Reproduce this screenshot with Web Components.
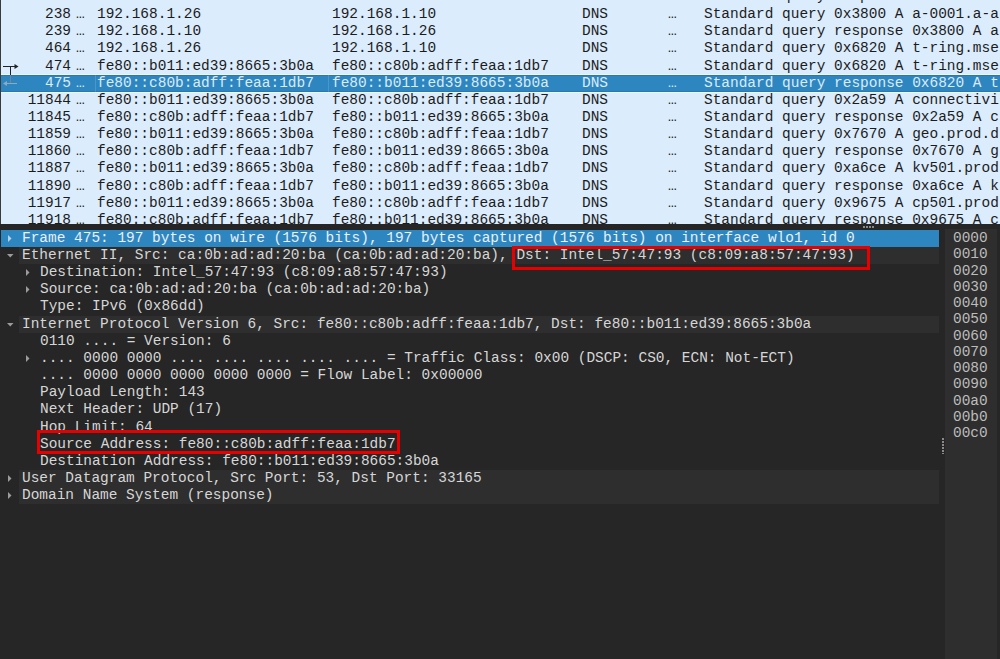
<!DOCTYPE html>
<html>
<head>
<meta charset="utf-8">
<style>
  html, body { margin: 0; padding: 0; height: 100%; background: #262626; overflow: hidden; }
</style>
</head>
<body>
<capture-window></capture-window>
<script>
const MONO = `"Liberation Mono", monospace`;

const PACKETS = [
  ['', '', '', '', 'Standard query response'],
  ['238', '192.168.1.26', '192.168.1.10', 'DNS', 'Standard query 0x3800 A a-0001.a-a'],
  ['239', '192.168.1.10', '192.168.1.26', 'DNS', 'Standard query response 0x3800 A a'],
  ['464', '192.168.1.26', '192.168.1.10', 'DNS', 'Standard query 0x6820 A t-ring.mse'],
  ['474', 'fe80::b011:ed39:8665:3b0a', 'fe80::c80b:adff:feaa:1db7', 'DNS', 'Standard query 0x6820 A t-ring.mse'],
  ['475', 'fe80::c80b:adff:feaa:1db7', 'fe80::b011:ed39:8665:3b0a', 'DNS', 'Standard query response 0x6820 A t'],
  ['11844', 'fe80::b011:ed39:8665:3b0a', 'fe80::c80b:adff:feaa:1db7', 'DNS', 'Standard query 0x2a59 A connectivi'],
  ['11845', 'fe80::c80b:adff:feaa:1db7', 'fe80::b011:ed39:8665:3b0a', 'DNS', 'Standard query response 0x2a59 A c'],
  ['11859', 'fe80::b011:ed39:8665:3b0a', 'fe80::c80b:adff:feaa:1db7', 'DNS', 'Standard query 0x7670 A geo.prod.d'],
  ['11860', 'fe80::c80b:adff:feaa:1db7', 'fe80::b011:ed39:8665:3b0a', 'DNS', 'Standard query response 0x7670 A g'],
  ['11887', 'fe80::b011:ed39:8665:3b0a', 'fe80::c80b:adff:feaa:1db7', 'DNS', 'Standard query 0xa6ce A kv501.prod'],
  ['11890', 'fe80::c80b:adff:feaa:1db7', 'fe80::b011:ed39:8665:3b0a', 'DNS', 'Standard query response 0xa6ce A k'],
  ['11917', 'fe80::b011:ed39:8665:3b0a', 'fe80::c80b:adff:feaa:1db7', 'DNS', 'Standard query 0x9675 A cp501.prod'],
  ['11918', 'fe80::c80b:adff:feaa:1db7', 'fe80::b011:ed39:8665:3b0a', 'DNS', 'Standard query response 0x9675 A c'],
];

const TREE = [
  { t: 'Frame 475: 197 bytes on wire (1576 bits), 197 bytes captured (1576 bits) on interface wlo1, id 0', lvl: 0, exp: 'closed', sel: 1 },
  { t: 'Ethernet II, Src: ca:0b:ad:ad:20:ba (ca:0b:ad:ad:20:ba), Dst: Intel_57:47:93 (c8:09:a8:57:47:93)', lvl: 0, exp: 'open', band: 1 },
  { t: 'Destination: Intel_57:47:93 (c8:09:a8:57:47:93)', lvl: 1, exp: 'closed' },
  { t: 'Source: ca:0b:ad:ad:20:ba (ca:0b:ad:ad:20:ba)', lvl: 1, exp: 'closed' },
  { t: 'Type: IPv6 (0x86dd)', lvl: 1 },
  { t: 'Internet Protocol Version 6, Src: fe80::c80b:adff:feaa:1db7, Dst: fe80::b011:ed39:8665:3b0a', lvl: 0, exp: 'open', band: 1 },
  { t: '0110 .... = Version: 6', lvl: 1 },
  { t: '.... 0000 0000 .... .... .... .... .... = Traffic Class: 0x00 (DSCP: CS0, ECN: Not-ECT)', lvl: 1, exp: 'closed' },
  { t: '.... 0000 0000 0000 0000 0000 = Flow Label: 0x00000', lvl: 1 },
  { t: 'Payload Length: 143', lvl: 1 },
  { t: 'Next Header: UDP (17)', lvl: 1 },
  { t: 'Hop Limit: 64', lvl: 1 },
  { t: 'Source Address: fe80::c80b:adff:feaa:1db7', lvl: 1 },
  { t: 'Destination Address: fe80::b011:ed39:8665:3b0a', lvl: 1 },
  { t: 'User Datagram Protocol, Src Port: 53, Dst Port: 33165', lvl: 0, exp: 'closed', band: 1 },
  { t: 'Domain Name System (response)', lvl: 0, exp: 'closed', band: 1 },
];

const OFFSETS = ['0000','0010','0020','0030','0040','0050','0060','0070','0080','0090','00a0','00b0','00c0'];

class PacketRow extends HTMLElement {
  connectedCallback() {
    const [no, src, dst, proto, info] = JSON.parse(this.getAttribute('data'));
    const mark = this.getAttribute('mark');
    // related-packet arrows in the first column
    const marks = {
      out: `<svg width="19" height="17" viewBox="0 0 19 17"><path d="M2 8.5H14" stroke="#222" fill="none"/><path d="M13.5 6l4 2.5-4 2.5z" fill="#222"/><path d="M9.5 8.5V17.2" stroke="#222" fill="none"/></svg>`,
      back: `<svg width="19" height="17" viewBox="0 0 19 17"><path d="M9.5 0V8.5" stroke="#6f8799" fill="none"/><path d="M5 8.5H16" stroke="#8fa9bd" fill="none"/><path d="M6 6l-4 2.5 4 2.5z" fill="#8fa9bd"/></svg>`,
    };
    this.attachShadow({ mode: 'open' });
    this.shadowRoot.innerHTML = `
      <style>
        :host {
          display: grid;
          grid-template-columns: 19px 51px 26px 235px 250px 87px 35px 1fr;
          height: 17.17px;
          line-height: 17.17px;
          white-space: nowrap;
          color: #1c1c1c;
        }
        :host([partial]) { margin-bottom: 1.4px; }
        :host([selected]) {
          background: #2e86c1;
          color: #dcebf6;
          box-shadow: 0 -1px 0 #eef6fd, 0 1px 0 #eef6fd, inset 0 1px 0 #2a78ad, inset 0 -1px 0 #2a78ad;
        }
        .mark { display: flex; }
        .no { text-align: right; }
        .cell { overflow: hidden; }
        .dots { padding-left: 5px; }
        .dots2 { margin-left: -1px; }
        .src { margin-left: -2px; padding-left: 2px; }
        .dst { margin-left: -4px; padding-left: 4px; }
        :host([selected]) .src, :host([selected]) .dst { box-shadow: inset 1px 0 0 rgba(255,255,255,.14); }
      </style>
      <span class="mark">${mark ? marks[mark] : ''}</span>
      <span class="cell no">${no}</span>
      <span class="cell dots">${no ? '…' : ''}</span>
      <span class="cell src">${src}</span>
      <span class="cell dst">${dst}</span>
      <span class="cell">${proto}</span>
      <span class="cell dots2">${no ? '…' : ''}</span>
      <span class="cell">${info}</span>
    `;
  }
}
customElements.define('packet-row', PacketRow);

class PacketList extends HTMLElement {
  connectedCallback() {
    this.attachShadow({ mode: 'open' });
    this.shadowRoot.innerHTML = `
      <style>
        :host {
          display: block;
          height: 224px;
          overflow: hidden;
          background: #dbecfc;
          font: 14.46px ${MONO};
          border-left: 1px solid #3a3a3a;
          box-sizing: border-box;
        }
        .inner { margin-top: -12.5px; }
      </style>
      <div class="inner"></div>
    `;
    const inner = this.shadowRoot.querySelector('.inner');
    PACKETS.forEach(p => {
      const r = document.createElement('packet-row');
      r.setAttribute('data', JSON.stringify(p));
      if (!p[0]) r.setAttribute('partial', '');
      if (p[0] === '474') r.setAttribute('mark', 'out');
      if (p[0] === '475') { r.setAttribute('mark', 'back'); r.setAttribute('selected', ''); }
      inner.appendChild(r);
    });
  }
}
customElements.define('packet-list', PacketList);

class TreeRow extends HTMLElement {
  connectedCallback() {
    const lvl = +this.getAttribute('lvl');
    const exp = this.getAttribute('exp');
    const tri = exp === 'open'
      ? `<svg width="9" height="9" viewBox="0 0 9 9"><path d="M1 3h6.5L4.25 6.5z"/></svg>`
      : exp === 'closed'
        ? `<svg width="9" height="9" viewBox="0 0 9 9"><path d="M2 1v7l3.5-3.5z"/></svg>`
        : '';
    this.attachShadow({ mode: 'open' });
    this.shadowRoot.innerHTML = `
      <style>
        :host {
          display: flex;
          height: 17.17px;
          line-height: 17.17px;
          white-space: nowrap;
          color: #d6d6d6;
          padding-left: ${lvl * 18 + 5}px;
        }
        :host([band]) .fill { background: #2e2e2e; }
        :host([sel]) { background: #2e86c1; color: #e8f1f8; }
        :host([sel]) path { fill: #b3d3ea; }
        path { fill: #9c9c9c; }
        .tri { width: 13px; flex: none; display: flex; align-items: center; }
        .fill { flex: 1; padding-left: 3px; }
      </style>
      <span class="tri">${tri}</span>
      <span class="fill"><slot></slot></span>
    `;
  }
}
customElements.define('tree-row', TreeRow);

class DetailTree extends HTMLElement {
  connectedCallback() {
    this.attachShadow({ mode: 'open' });
    this.shadowRoot.innerHTML = `
      <style>
        :host {
          display: block;
          flex: 1;
          position: relative;
          font: 14.46px ${MONO};
          padding: 0.8px 1px 0 1px;
        }
        .hl {
          position: absolute;
          border: 3px solid #e60000;
          box-sizing: border-box;
          pointer-events: none;
        }
        .a { left: 512px; top: 17px; width: 358px; height: 24px; }
        .b { left: 37px; top: 201px; width: 363px; height: 24px; }
      </style>
      <div class="rows"></div>
      <div class="hl a"></div>
      <div class="hl b"></div>
    `;
    const rows = this.shadowRoot.querySelector('.rows');
    TREE.forEach(n => {
      const r = document.createElement('tree-row');
      r.setAttribute('lvl', n.lvl);
      if (n.exp) r.setAttribute('exp', n.exp);
      if (n.band) r.setAttribute('band', '');
      if (n.sel) r.setAttribute('sel', '');
      r.textContent = n.t;
      rows.appendChild(r);
    });
  }
}
customElements.define('detail-tree', DetailTree);

class HexPane extends HTMLElement {
  connectedCallback() {
    this.attachShadow({ mode: 'open' });
    this.shadowRoot.innerHTML = `
      <style>
        :host {
          display: block;
          width: 52px;
          margin-right: 3px;
          background: #2e2e2e;
          color: #bcbcbc;
          font: 14.46px ${MONO};
          line-height: 16.25px;
          padding: 1px 0 0 8px;
          box-sizing: border-box;
        }
        div { height: 16.25px; }
      </style>
      ${OFFSETS.map(o => `<div>${o}</div>`).join('')}
    `;
  }
}
customElements.define('hex-pane', HexPane);

class Grip extends HTMLElement {
  connectedCallback() {
    const v = this.hasAttribute('vertical');
    this.attachShadow({ mode: 'open' });
    this.shadowRoot.innerHTML = `
      <style>
        :host {
          display: flex;
          flex: none;
          align-items: center;
          justify-content: center;
          ${v ? 'width: 5px;' : 'height: 5px;'}
          background: #262626;
        }
        i {
          display: block;
          ${v ? 'width: 2px; height: 16px; margin-top: 3px;' : 'width: 11px; height: 2px; margin-left: 736px;'}
          background: ${v ? 'repeating-linear-gradient(to bottom,#8a8a8a 0 2px,transparent 2px 3px)' : 'repeating-linear-gradient(to right,#8a8a8a 0 2px,transparent 2px 3px)'};
        }
      </style>
      <i></i>
    `;
  }
}
customElements.define('pane-grip', Grip);

class CaptureWindow extends HTMLElement {
  connectedCallback() {
    this.attachShadow({ mode: 'open' });
    this.shadowRoot.innerHTML = `
      <style>
        :host { display: flex; flex-direction: column; width: 1000px; height: 659px; overflow: hidden; background: #262626; }
        .lower { display: flex; flex: 1; min-height: 0; }
      </style>
      <packet-list></packet-list>
      <pane-grip></pane-grip>
      <div class="lower">
        <detail-tree></detail-tree>
        <pane-grip vertical></pane-grip>
        <hex-pane></hex-pane>
      </div>
    `;
  }
}
customElements.define('capture-window', CaptureWindow);
</script>
</body>
</html>
